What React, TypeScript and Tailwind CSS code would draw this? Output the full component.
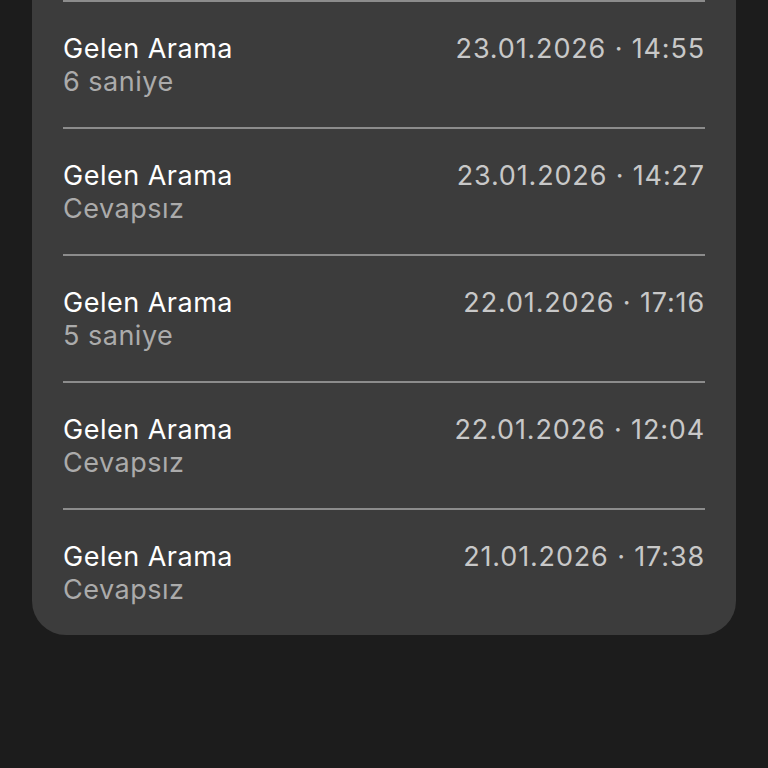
const rows = [
  { title: 'Gelen Arama', sub: '6 saniye', date: '23.01.2026 · 14:55' },
  { title: 'Gelen Arama', sub: 'Cevapsız', date: '23.01.2026 · 14:27' },
  { title: 'Gelen Arama', sub: '5 saniye', date: '22.01.2026 · 17:16' },
  { title: 'Gelen Arama', sub: 'Cevapsız', date: '22.01.2026 · 12:04' },
  { title: 'Gelen Arama', sub: 'Cevapsız', date: '21.01.2026 · 17:38' },
]

export default function App() {
  return (
    <div className="min-h-[768px] bg-[#1c1c1c] font-['Inter',sans-serif]">
      <div className="mx-8 rounded-b-[34px] bg-[#3c3c3c] px-[31px]">
        {rows.map((r, i) => (
          <div key={i} className="flex items-start justify-between border-t-2 border-[#8c8c8c] pt-[30px] pb-[29px] text-[27px] leading-[33px] tracking-[0.5px]">
            <div>
              <div className="text-white">{r.title}</div>
              <div className="text-[#ababab]">{r.sub}</div>
            </div>
            <div className="text-[#c8c8c8] tracking-[0.85px]">{r.date}</div>
          </div>
        ))}
      </div>
    </div>
  )
}
